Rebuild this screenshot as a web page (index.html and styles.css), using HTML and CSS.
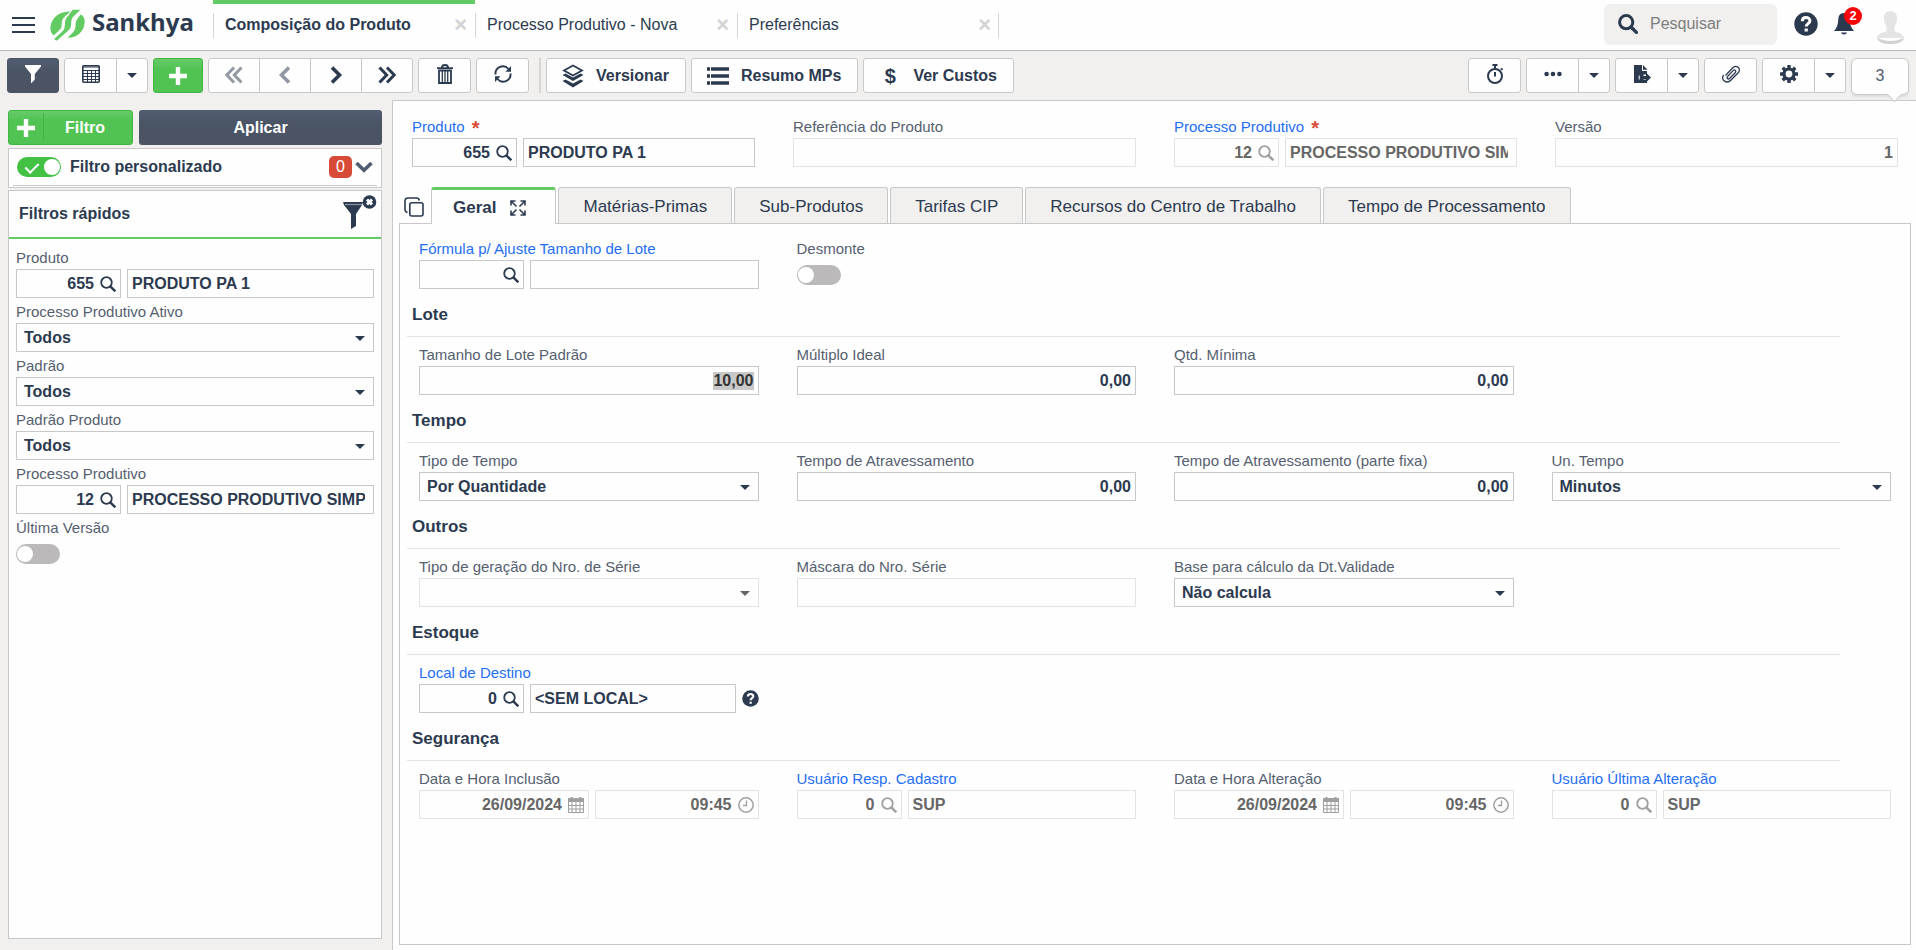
FILE: index.html
```html
<!DOCTYPE html>
<html lang="pt-BR">
<head>
    <meta charset="UTF-8">
    <meta name="viewport" content="width=device-width, initial-scale=1.0">
    <title>Composição do Produto</title>
    <link rel="stylesheet" href="styles.css">
</head>
<body>
    <!-- icons -->
    <svg class="sprite" aria-hidden="true">
        <symbol id="i-search" viewBox="0 0 16 16"><circle cx="6.5" cy="6.5" r="5.3" fill="none" stroke="currentColor" stroke-width="1.8"/><path d="M10.3 10.3l5 5" stroke="currentColor" stroke-width="2.4"/></symbol>
        <symbol id="i-search-bold" viewBox="0 0 20 20"><circle cx="8.2" cy="8.2" r="6.6" fill="none" stroke="currentColor" stroke-width="3"/><path d="M13 13l5.4 5.4" stroke="currentColor" stroke-width="3.4" stroke-linecap="round"/></symbol>
        <symbol id="i-funnel" viewBox="0 0 18 18"><path d="M1 0h16v1.500l-6.200 7.500v5.500l-3.300 3.500h-.5V9L1 1.500z" fill="currentColor"/></symbol>
        <symbol id="i-table" viewBox="0 0 18 18"><rect x=".8" y=".8" width="16.400" height="16.400" rx="1" fill="none" stroke="currentColor" stroke-width="1.600"/><path d="M1 2h16M1 5.500h16M1 8.500h16M1 11.500h16M1 14.500h16M5.500 5v12M9.500 5v12M13.500 5v12" stroke="currentColor" stroke-width="1"/></symbol>
        <symbol id="i-plus" viewBox="0 0 18 18"><path d="M9 0v18M0 9h18" stroke="currentColor" stroke-width="4.400"/></symbol>
        <symbol id="i-left" viewBox="0 0 18 18"><path d="M13 1.500L5.500 9l7.500 7.500" fill="none" stroke="currentColor" stroke-width="3.600"/></symbol>
        <symbol id="i-right" viewBox="0 0 18 18"><path d="M5 1.500L12.500 9 5 16.500" fill="none" stroke="currentColor" stroke-width="3.600"/></symbol>
        <symbol id="i-first" viewBox="0 0 18 18"><path d="M9 1.500L1.800 9 9 16.500M16.500 1.500L9.300 9l7.200 7.500" fill="none" stroke="currentColor" stroke-width="3"/></symbol>
        <symbol id="i-last" viewBox="0 0 18 18"><path d="M1.500 1.500L8.700 9l-7.200 7.500M9 1.500L16.200 9 9 16.500" fill="none" stroke="currentColor" stroke-width="3"/></symbol>
        <symbol id="i-trash" viewBox="0 0 16 20"><path d="M0 4.200h16M5 3.500C5 1.800 6.500 1 8 1s3 .8 3 2.500" fill="none" stroke="currentColor" stroke-width="1.800"/><path d="M2 6.500h12v12.500H2z" fill="none" stroke="currentColor" stroke-width="1.800"/><path d="M5.300 7v11M8 7v11M10.700 7v11" stroke="currentColor" stroke-width="1.300"/></symbol>
        <symbol id="i-refresh" viewBox="0 0 18 18"><path d="M1.500 9.500A7.400 7.400 0 0 1 14.500 4M16.500 8.500A7.400 7.400 0 0 1 3.500 14" fill="none" stroke="currentColor" stroke-width="1.900"/><path d="M17 1v5.800H11.500zM1 17v-5.800h5.500z" fill="currentColor"/></symbol>
        <symbol id="i-layers" viewBox="0 0 22 24"><path d="M11 1.500l9 5-9 5-9-5z" fill="none" stroke="currentColor" stroke-width="1.800"/><path d="M.5 11l3-1.500L11 13.500l7.500-4 3 1.500L11 17z" fill="currentColor"/><path d="M.5 17l3-1.500L11 19.500l7.500-4 3 1.500L11 23.500z" fill="currentColor"/></symbol>
        <symbol id="i-list" viewBox="0 0 22 18"><path d="M0 2h3M0 9h3M0 16h3M4 2h18M4 9h18M4 16h18" stroke="currentColor" stroke-width="3.400"/></symbol>
        <symbol id="i-stopwatch" viewBox="0 0 18 20"><circle cx="9" cy="12" r="7" fill="none" stroke="currentColor" stroke-width="2"/><path d="M6.500 1h5M9 1v3.500M9 8v4.500M14.800 4.500l1.800 1.300" stroke="currentColor" stroke-width="2"/></symbol>
        <symbol id="i-dots" viewBox="0 0 18 18"><circle cx="2.600" cy="9" r="2.300" fill="currentColor"/><circle cx="9" cy="9" r="2.300" fill="currentColor"/><circle cx="15.400" cy="9" r="2.300" fill="currentColor"/></symbol>
        <symbol id="i-export" viewBox="0 0 18 18"><path d="M1 0h8v6h5v3.500h-3.500v5H14V18H1z" fill="currentColor"/><path d="M10 0l4.500 4.800H10z" fill="currentColor"/><path d="M8 11h5V7.500l5 5-5 5V14H8z" fill="currentColor"/><path d="M6.200 10.500v4" stroke="#fff" stroke-width="1"/></symbol>
        <symbol id="i-clip" viewBox="0 0 20 18"><path d="M4.500 10.500l6.800-7.200c1.500-1.600 3.600-2.600 5.600-1.200 2 1.600 1.800 3.900.3 5.600l-7.400 7.600c-1.500 1.500-4.200 2.200-6.600.6-2.100-1.700-2-4.200-.4-6M6.800 11.200l5.300-5.600c.7-.7 1.700-.8 2.300-.2s.5 1.600-.2 2.300l-5.400 5.600c-.7.700-1.700.8-2.300.2s-.4-1.600.3-2.300" fill="none" stroke="currentColor" stroke-width="1.300"/></symbol>
        <symbol id="i-gear" viewBox="0 0 18 18"><circle cx="9" cy="9" r="5" fill="none" stroke="currentColor" stroke-width="3.200"/><path d="M9 0v3.500M9 14.500V18M0 9h3.500M14.500 9H18M2.700 2.700L5.200 5.200M12.800 12.800l2.500 2.500M2.700 15.300l2.500-2.500M12.800 5.200l2.500-2.500" stroke="currentColor" stroke-width="3.400"/></symbol>
        <symbol id="i-help" viewBox="0 0 24 24"><circle cx="12" cy="12" r="11.700" fill="currentColor"/><path d="M8.300 9.300c0-5 7.600-4.700 7.600-.5 0 2.900-3.700 2.700-3.700 5.700" fill="none" stroke="#fff" stroke-width="3"/><path d="M10.600 16.500h3.200v3h-3.200z" fill="#fff"/></symbol>
        <symbol id="i-bell" viewBox="0 0 20 23"><path d="M10 1c4 0 5.500 2.800 5.700 6.500.2 5 1.500 8.500 4.300 11.500H0c2.800-3 4.100-6.500 4.300-11.500C4.500 3.800 6 1 10 1zM7 20.500h6c-.5 1.300-1.500 2-3 2s-2.500-.7-3-2z" fill="currentColor"/></symbol>
        <symbol id="i-calendar" viewBox="0 0 16 16"><path d="M0 1h16v4H0zM2.500 0h2v2h-2zM11.500 0h2v2h-2z" fill="currentColor"/><path d="M.5 5v10.500h15V5M0 8.500h16M0 12h16M4 5v11M8 5v11M12 5v11" fill="none" stroke="currentColor" stroke-width="1"/></symbol>
        <symbol id="i-clock" viewBox="0 0 16 16"><circle cx="8" cy="8" r="7.200" fill="none" stroke="currentColor" stroke-width="1.500"/><path d="M8.500 3.500V8.500H5" fill="none" stroke="currentColor" stroke-width="1.300"/></symbol>
        <symbol id="i-expand" viewBox="0 0 16 16"><path d="M1 5.500V1h4.500M10.500 1H15v4.500M15 10.500V15h-4.500M5.500 15H1v-4.500M1.500 1.500l5 5M14.500 1.500l-5 5M14.500 14.500l-5-5M1.500 14.500l5-5" fill="none" stroke="currentColor" stroke-width="1.600"/></symbol>
        <symbol id="i-copy" viewBox="0 0 20 20"><rect x="5.800" y="5.800" width="13.200" height="13.200" rx="2" fill="none" stroke="currentColor" stroke-width="1.600"/><path d="M3.500 15.500C1.800 15 1 14.300 1 12.500V4c0-2 1-3 3-3h8.500c1.800 0 2.500.7 3 2.500" fill="none" stroke="currentColor" stroke-width="1.600"/></symbol>
        <symbol id="i-down" viewBox="0 0 18 12"><path d="M1.500 2L9 9.300 16.500 2" fill="none" stroke="currentColor" stroke-width="3.600"/></symbol>
        <symbol id="i-clear" viewBox="0 0 34 34"><path d="M0 7h20l-1 3-6 9v12l-5 3V19L1 10z" fill="currentColor"/><path d="M2 9.500h17" stroke="#8a93a0" stroke-width="1.200"/><circle cx="26.500" cy="7" r="6.800" fill="currentColor"/><path d="M24 4.500l5 5M29 4.500l-5 5" stroke="#fff" stroke-width="3"/></symbol>
    </svg>

    <header class="topbar">
        <button class="menu" aria-label="Menu"><span></span><span></span><span></span></button>
        <a href="#" class="logo">
            <svg width="35" height="32" viewBox="0 0 35 32" aria-hidden="true">
                <path d="M20.500 2.500C9 2.500 2 8.500.6 17c-.7 4.500.8 8 3.400 9.300l4.200-4c3.800-3.300 3.300-4 3.500-7.500.1-4 1.200-5.300 4-8z" fill="#62cb63"/>
                <path d="M22.500.8h8l-5.800 5.400c-2.900 2.800-3.300 4-3.500 8-.2 4.300-.8 5.500-4 8.300L7 31.500c-1.500-.2-2-.7-2.800-1.600l7.800-7.200c2.400-2.400 2.700-3.500 2.900-7.500.2-4.500 1.200-6.500 3.800-9z" fill="#62cb63"/>
                <path d="M30.800 5.500c3 1.200 4.300 4.500 3.800 8.800-.9 8.500-7.600 14.500-16.800 14.500l3.800-4c3-2.900 3.800-4.600 3.900-8.600.1-3.500.7-4.900 2.800-7.700z" fill="#62cb63"/>
            </svg>
            <span>Sankhya</span>
        </a>
        <nav class="pages">
            <div class="page active"><a href="#">Composição do Produto</a><button aria-label="Fechar">×</button></div>
            <div class="page"><a href="#">Processo Produtivo - Nova</a><button aria-label="Fechar">×</button></div>
            <div class="page"><a href="#">Preferências</a><button aria-label="Fechar">×</button></div>
        </nav>
        <div class="search">
            <svg width="20" height="20"><use href="#i-search-bold"/></svg>
            <input type="text" placeholder="Pesquisar" aria-label="Pesquisar">
        </div>
        <button class="top-icon" aria-label="Ajuda"><svg width="24" height="24"><use href="#i-help"/></svg></button>
        <button class="top-icon bell" aria-label="Notificações"><svg width="20" height="23"><use href="#i-bell"/></svg><span class="count">2</span></button>
        <button class="top-icon avatar" aria-label="Usuário">
            <svg width="27" height="33" viewBox="0 0 27 33"><path d="M13.500 0c4.500 0 6.500 3 6.500 7 0 3-.7 6-2.500 8v5.500c4.500 1 9.500 3 9.500 6.500H0c0-3.500 5-5.500 9.500-6.500V15C7.700 13 7 10 7 7c0-4 2-7 6.500-7z" fill="#e4e4e4"/><path d="M0 27c2 0 5 3 13.500 3S25 27 27 27c-1 4-6 6-13.500 6S1 31 0 27z" fill="#d2d2d2"/></svg>
        </button>
    </header>

    <div class="toolbar">
        <button class="btn dark" aria-label="Filtros"><svg width="18" height="18"><use href="#i-funnel"/></svg></button>
        <div class="group">
            <button class="btn" aria-label="Modo grade"><svg width="18" height="18"><use href="#i-table"/></svg></button>
            <button class="btn drop" aria-label="Mais modos"><i class="caret"></i></button>
        </div>
        <button class="btn add" aria-label="Adicionar"><svg width="18" height="18"><use href="#i-plus"/></svg></button>
        <div class="group nav">
            <button class="btn" disabled aria-label="Primeiro"><svg width="18" height="18"><use href="#i-first"/></svg></button>
            <button class="btn" disabled aria-label="Anterior"><svg width="18" height="18"><use href="#i-left"/></svg></button>
            <button class="btn" aria-label="Próximo"><svg width="18" height="18"><use href="#i-right"/></svg></button>
            <button class="btn" aria-label="Último"><svg width="18" height="18"><use href="#i-last"/></svg></button>
        </div>
        <button class="btn" aria-label="Excluir"><svg width="16" height="20"><use href="#i-trash"/></svg></button>
        <button class="btn" aria-label="Atualizar"><svg width="18" height="18"><use href="#i-refresh"/></svg></button>
        <span class="sep"></span>
        <button class="btn text"><svg width="22" height="24"><use href="#i-layers"/></svg>Versionar</button>
        <button class="btn text"><svg width="22" height="18"><use href="#i-list"/></svg>Resumo MPs</button>
        <button class="btn text"><span class="money">$</span>Ver Custos</button>

        <button class="btn push" aria-label="Cronômetro"><svg width="18" height="20"><use href="#i-stopwatch"/></svg></button>
        <div class="group">
            <button class="btn" aria-label="Mais opções"><svg width="18" height="18"><use href="#i-dots"/></svg></button>
            <button class="btn drop" aria-label="Abrir opções"><i class="caret"></i></button>
        </div>
        <div class="group">
            <button class="btn" aria-label="Exportar"><svg width="18" height="18"><use href="#i-export"/></svg></button>
            <button class="btn drop" aria-label="Abrir exportação"><i class="caret"></i></button>
        </div>
        <button class="btn" aria-label="Anexos"><svg width="20" height="18"><use href="#i-clip"/></svg></button>
        <div class="group">
            <button class="btn" aria-label="Configurações"><svg width="18" height="18"><use href="#i-gear"/></svg></button>
            <button class="btn drop" aria-label="Abrir configurações"><i class="caret"></i></button>
        </div>
        <div class="records">3</div>
    </div>

    <div class="workspace">
        <!-- filters -->
        <aside class="sidebar">
            <div class="filter-actions">
                <button class="new-filter"><span><svg width="18" height="18"><use href="#i-plus"/></svg></span><b>Filtro</b></button>
                <button class="apply">Aplicar</button>
            </div>
            <div class="custom-filter">
                <div class="custom-filter-row">
                    <input type="checkbox" class="switch" id="filtro-personalizado" checked>
                    <label for="filtro-personalizado">Filtro personalizado</label>
                    <span class="badge">0</span>
                    <button aria-label="Expandir"><svg width="18" height="12"><use href="#i-down"/></svg></button>
                </div>
            </div>
            <section class="quick">
                <div class="quick-head">
                    <h2>Filtros rápidos</h2>
                    <button aria-label="Limpar filtros"><svg width="34" height="34"><use href="#i-clear"/></svg></button>
                </div>
                <div class="quick-body">
                    <div class="field">
                        <label for="f-produto">Produto</label>
                        <div class="pair">
                            <div class="box code"><input type="text" id="f-produto" value="655"><button aria-label="Pesquisar produto"><svg width="16" height="16"><use href="#i-search"/></svg></button></div>
                            <div class="box"><input type="text" value="PRODUTO PA 1" aria-label="Descrição do produto"></div>
                        </div>
                    </div>
                    <div class="field">
                        <label for="f-ativo">Processo Produtivo Ativo</label>
                        <div class="box choice"><select id="f-ativo"><option>Todos</option></select></div>
                    </div>
                    <div class="field">
                        <label for="f-padrao">Padrão</label>
                        <div class="box choice"><select id="f-padrao"><option>Todos</option></select></div>
                    </div>
                    <div class="field">
                        <label for="f-padrao-produto">Padrão Produto</label>
                        <div class="box choice"><select id="f-padrao-produto"><option>Todos</option></select></div>
                    </div>
                    <div class="field">
                        <label for="f-processo">Processo Produtivo</label>
                        <div class="pair">
                            <div class="box code"><input type="text" id="f-processo" value="12"><button aria-label="Pesquisar processo"><svg width="16" height="16"><use href="#i-search"/></svg></button></div>
                            <div class="box"><input type="text" value="PROCESSO PRODUTIVO SIMPLES" aria-label="Descrição do processo"></div>
                        </div>
                    </div>
                    <div class="field">
                        <label for="f-ultima">Última Versão</label>
                        <input type="checkbox" class="switch" id="f-ultima">
                    </div>
                </div>
            </section>
        </aside>

        <main class="content">
            <div class="columns head-fields">
                <div class="field">
                    <label for="produto" class="link">Produto <span class="req">*</span></label>
                    <div class="pair">
                        <div class="box code"><input type="text" id="produto" value="655"><button aria-label="Pesquisar produto"><svg width="16" height="16"><use href="#i-search"/></svg></button></div>
                        <div class="box"><input type="text" value="PRODUTO PA 1" aria-label="Descrição do produto"></div>
                    </div>
                </div>
                <div class="field">
                    <label for="referencia">Referência do Produto</label>
                    <div class="box off"><input type="text" id="referencia" disabled></div>
                </div>
                <div class="field">
                    <label for="processo" class="link">Processo Produtivo <span class="req">*</span></label>
                    <div class="pair">
                        <div class="box code off"><input type="text" id="processo" value="12" disabled><button disabled aria-label="Pesquisar processo"><svg width="16" height="16"><use href="#i-search"/></svg></button></div>
                        <div class="box off"><input type="text" value="PROCESSO PRODUTIVO SIMPLES" disabled aria-label="Descrição do processo"></div>
                    </div>
                </div>
                <div class="field">
                    <label for="versao">Versão</label>
                    <div class="box num off"><input type="text" id="versao" value="1" disabled></div>
                </div>
            </div>

            <div class="tabs">
                <button class="copy" aria-label="Abas"><svg width="20" height="20"><use href="#i-copy"/></svg></button>
                <button class="tab active">Geral<svg width="16" height="16"><use href="#i-expand"/></svg></button>
                <button class="tab">Matérias-Primas</button>
                <button class="tab">Sub-Produtos</button>
                <button class="tab">Tarifas CIP</button>
                <button class="tab">Recursos do Centro de Trabalho</button>
                <button class="tab">Tempo de Processamento</button>
            </div>

            <div class="panel">
                <div class="columns">
                    <div class="field">
                        <label for="formula" class="link">Fórmula p/ Ajuste Tamanho de Lote</label>
                        <div class="pair">
                            <div class="box code"><input type="text" id="formula"><button aria-label="Pesquisar fórmula"><svg width="16" height="16"><use href="#i-search"/></svg></button></div>
                            <div class="box"><input type="text" aria-label="Descrição da fórmula"></div>
                        </div>
                    </div>
                    <div class="field">
                        <label for="desmonte">Desmonte</label>
                        <input type="checkbox" class="switch" id="desmonte">
                    </div>
                </div>

                <h3>Lote</h3>
                <div class="columns">
                    <div class="field">
                        <label for="lote">Tamanho de Lote Padrão</label>
                        <div class="box num"><input type="text" id="lote" value="10,00"></div>
                    </div>
                    <div class="field">
                        <label for="multiplo">Múltiplo Ideal</label>
                        <div class="box num"><input type="text" id="multiplo" value="0,00"></div>
                    </div>
                    <div class="field">
                        <label for="minima">Qtd. Mínima</label>
                        <div class="box num"><input type="text" id="minima" value="0,00"></div>
                    </div>
                </div>

                <h3>Tempo</h3>
                <div class="columns">
                    <div class="field">
                        <label for="tipo-tempo">Tipo de Tempo</label>
                        <div class="box choice"><select id="tipo-tempo"><option>Por Quantidade</option></select></div>
                    </div>
                    <div class="field">
                        <label for="atravessamento">Tempo de Atravessamento</label>
                        <div class="box num"><input type="text" id="atravessamento" value="0,00"></div>
                    </div>
                    <div class="field">
                        <label for="parte-fixa">Tempo de Atravessamento (parte fixa)</label>
                        <div class="box num"><input type="text" id="parte-fixa" value="0,00"></div>
                    </div>
                    <div class="field">
                        <label for="un-tempo">Un. Tempo</label>
                        <div class="box choice"><select id="un-tempo"><option>Minutos</option></select></div>
                    </div>
                </div>

                <h3>Outros</h3>
                <div class="columns">
                    <div class="field">
                        <label for="tipo-serie">Tipo de geração do Nro. de Série</label>
                        <div class="box choice off"><select id="tipo-serie" disabled><option></option></select></div>
                    </div>
                    <div class="field">
                        <label for="mascara">Máscara do Nro. Série</label>
                        <div class="box off"><input type="text" id="mascara" disabled></div>
                    </div>
                    <div class="field">
                        <label for="validade">Base para cálculo da Dt.Validade</label>
                        <div class="box choice"><select id="validade"><option>Não calcula</option></select></div>
                    </div>
                </div>

                <h3>Estoque</h3>
                <div class="columns">
                    <div class="field">
                        <label for="local" class="link">Local de Destino</label>
                        <div class="pair">
                            <div class="box code"><input type="text" id="local" value="0"><button aria-label="Pesquisar local"><svg width="16" height="16"><use href="#i-search"/></svg></button></div>
                            <div class="box"><input type="text" value="&lt;SEM LOCAL&gt;" aria-label="Descrição do local"></div>
                            <button class="hint" aria-label="Ajuda"><svg width="17" height="17"><use href="#i-help"/></svg></button>
                        </div>
                    </div>
                </div>

                <h3>Segurança</h3>
                <div class="columns">
                    <div class="field">
                        <label for="inclusao">Data e Hora Inclusão</label>
                        <div class="pair">
                            <div class="box date off"><input type="text" id="inclusao" value="26/09/2024" disabled><button disabled aria-label="Calendário"><svg width="16" height="16"><use href="#i-calendar"/></svg></button></div>
                            <div class="box num off"><input type="text" value="09:45" disabled aria-label="Hora inclusão"><button disabled aria-label="Relógio"><svg width="16" height="16"><use href="#i-clock"/></svg></button></div>
                        </div>
                    </div>
                    <div class="field">
                        <label for="cadastro" class="link">Usuário Resp. Cadastro</label>
                        <div class="pair">
                            <div class="box code off"><input type="text" id="cadastro" value="0" disabled><button disabled aria-label="Pesquisar usuário"><svg width="16" height="16"><use href="#i-search"/></svg></button></div>
                            <div class="box off"><input type="text" value="SUP" disabled aria-label="Nome do usuário"></div>
                        </div>
                    </div>
                    <div class="field">
                        <label for="alteracao">Data e Hora Alteração</label>
                        <div class="pair">
                            <div class="box date off"><input type="text" id="alteracao" value="26/09/2024" disabled><button disabled aria-label="Calendário"><svg width="16" height="16"><use href="#i-calendar"/></svg></button></div>
                            <div class="box num off"><input type="text" value="09:45" disabled aria-label="Hora alteração"><button disabled aria-label="Relógio"><svg width="16" height="16"><use href="#i-clock"/></svg></button></div>
                        </div>
                    </div>
                    <div class="field">
                        <label for="ultima-alteracao" class="link">Usuário Última Alteração</label>
                        <div class="pair">
                            <div class="box code off"><input type="text" id="ultima-alteracao" value="0" disabled><button disabled aria-label="Pesquisar usuário"><svg width="16" height="16"><use href="#i-search"/></svg></button></div>
                            <div class="box off"><input type="text" value="SUP" disabled aria-label="Nome do usuário"></div>
                        </div>
                    </div>
                </div>
            </div>
        </main>
    </div>

    <script src="script.js"></script>
</body>
</html>
```

FILE: styles.css
```css
* {
    box-sizing: border-box;
}
body {
    font-family: "Liberation Sans", Arial, sans-serif;
    font-size: 16px;
    color: #2c3a50;
    background-color: #f1f0ee;
    margin: 0;
    min-height: 100vh;
    display: flex;
    flex-direction: column;
}
button, input, select {
    font: inherit;
    color: inherit;
}
button {
    background: none;
    border: none;
    padding: 0;
    cursor: pointer;
}
a {
    color: inherit;
    text-decoration: none;
}
svg {
    display: block;
    flex: none;
}
.sprite {
    position: absolute;
    width: 0;
    height: 0;
}

/* top bar */
.topbar {
    display: flex;
    align-items: center;
    height: 51px;
    padding: 0 12px;
    background-color: #fefefe;
    border-bottom: 1px solid #b9b9b9;
}
.menu {
    display: flex;
    flex-direction: column;
    gap: 5px;
    width: 23px;
}
.menu span {
    height: 2px;
    background-color: #2c3a50;
}
.logo {
    display: flex;
    align-items: center;
    gap: 7px;
    width: 163px;
    margin-left: 15px;
    font-family: "Noto Sans", "Open Sans", sans-serif;
    font-size: 24px;
    line-height: 32px;
    font-weight: bold;
}
.logo span {
    margin-top: -6px;
}
.pages {
    display: flex;
    align-self: stretch;
    flex: 1;
}
.page {
    display: flex;
    align-items: center;
    justify-content: space-between;
    width: 262px;
    padding: 0 8px 5px 12px;
    border-top: 4px solid transparent;
    background: linear-gradient(#d3d6dc, #d3d6dc) 0 9px / 1px 25px no-repeat;
}
.page.active {
    border-top-color: #62cb63;
    font-weight: bold;
}
.page:last-child {
    background: linear-gradient(#d3d6dc, #d3d6dc) 0 9px / 1px 25px no-repeat, linear-gradient(#d3d6dc, #d3d6dc) 100% 9px / 1px 25px no-repeat;
}
.page button {
    color: #d3d3d3;
    font-size: 22px;
    line-height: 20px;
    font-weight: bold;
}
.search {
    display: flex;
    align-items: center;
    gap: 12px;
    width: 173px;
    height: 41px;
    margin-bottom: 2px;
    padding: 0 14px;
    border-radius: 6px;
    background-color: #f1f0ee;
}
.search input {
    width: 100%;
    min-width: 0;
    padding: 0;
    border: none;
    background: none;
}
.search input::placeholder {
    color: #7d7d7d;
}
.top-icon {
    position: relative;
    margin: 0 0 3px 17px;
}
.bell {
    margin-left: 16px;
}
.count {
    position: absolute;
    top: -5px;
    right: -8px;
    width: 18px;
    border-radius: 9px;
    background-color: #fb0007;
    color: #fff;
    font-size: 13px;
    line-height: 18px;
    font-weight: bold;
}
.avatar {
    margin: 5px 0 0 23px;
}

/* toolbar */
.toolbar {
    display: flex;
    gap: 5px;
    height: 49px;
    padding: 7px 7px 0;
}
.group {
    display: flex;
}
.group .btn + .btn {
    margin-left: -1px;
    border-top-left-radius: 0;
    border-bottom-left-radius: 0;
}
.group .btn:not(:last-child) {
    border-top-right-radius: 0;
    border-bottom-right-radius: 0;
}
.btn {
    display: flex;
    align-items: center;
    justify-content: center;
    width: 53px;
    height: 35px;
    padding-bottom: 4px;
    border: 1px solid #c8c8c8;
    border-radius: 3px;
    background-color: #fefefe;
}
.btn:disabled {
    color: #9299a3;
}
.nav .btn, .btn.dark {
    width: 52px;
}
.nav .btn {
    padding-bottom: 2px;
}
.btn.drop {
    width: 32px;
    padding-bottom: 0;
}
.caret {
    border: 5px solid transparent;
    border-top-color: #2c3a50;
    border-bottom: none;
}
.btn.dark, .apply {
    background: linear-gradient(#525d70, #4a5464 40%);
    border-color: #4a5464;
    color: #fff;
}
.btn.add {
    width: 50px;
    padding-bottom: 0;
}
.btn.add, .new-filter {
    background: linear-gradient(#67cb69, #50c352 30%);
    border: 1px solid #3fb842;
    color: #fff;
}
.sep {
    width: 2px;
    height: 35px;
    margin-left: 5px;
    background-color: #d6d6d6;
}
.btn.text {
    width: auto;
    gap: 12px;
    padding: 0 16px 0 15px;
    font-weight: bold;
}
.money {
    width: 22px;
    font-size: 20px;
    line-height: 22px;
}
.push {
    margin-left: auto;
}
.records {
    position: relative;
    width: 58px;
    height: 37px;
    border: 1px solid #c8c8c8;
    border-radius: 6px;
    background-color: #fefefe;
    box-shadow: 0 2px 2px #ddd;
    color: #4f5b6e;
    line-height: 33px;
    text-align: center;
}
.records::after {
    content: "";
    position: absolute;
    right: 8px;
    bottom: -6px;
    width: 10px;
    height: 10px;
    border: 1px solid #c8c8c8;
    border-width: 0 1px 1px 0;
    background-color: #fefefe;
    transform: rotate(45deg);
}

.workspace {
    display: flex;
    flex: 1;
}

/* sidebar */
.sidebar {
    display: flex;
    flex-direction: column;
    width: 392px;
    padding: 10px 10px 11px 8px;
}
.filter-actions {
    display: flex;
    gap: 6px;
    height: 35px;
    margin-bottom: 3px;
    font-weight: bold;
}
.new-filter {
    display: flex;
    align-items: center;
    width: 125px;
    border-radius: 3px;
}
.new-filter span {
    display: flex;
    align-items: center;
    justify-content: center;
    width: 35px;
    height: 29px;
    border-right: 1px solid #3fb842;
}
.new-filter b {
    flex: 1;
    padding-right: 6px;
}
.apply {
    flex: 1;
    border-radius: 3px;
}
.custom-filter {
    height: 40px;
    margin-bottom: 2px;
    padding: 0 4px;
    border: 1px solid #c8c8c8;
    background-color: #fefefe;
}
.custom-filter-row {
    display: flex;
    align-items: center;
    height: 37px;
    padding: 0 4px;
    border-bottom: 1px solid #c8c8c8;
    font-weight: bold;
}
.custom-filter-row label {
    flex: 1;
    margin-left: 9px;
}
.custom-filter-row button {
    margin-left: 3px;
    color: #4f5b6e;
}
.badge {
    width: 23px;
    border-radius: 5px;
    background-color: #d84a38;
    color: #fff;
    line-height: 22px;
    font-weight: normal;
    text-align: center;
}
.switch {
    appearance: none;
    position: relative;
    display: block;
    width: 44px;
    height: 20px;
    margin: 0;
    border-radius: 10px;
    background-color: #bbb9ba;
}
.switch::before {
    content: "";
    position: absolute;
    top: 2px;
    left: 1px;
    width: 16px;
    height: 16px;
    border-radius: 8px;
    background-color: #fff;
}
.switch:checked {
    background-color: #42c145;
}
.switch:checked::before {
    left: 27px;
}
.switch:checked::after {
    content: "";
    position: absolute;
    top: 3px;
    left: 11px;
    width: 6px;
    height: 11px;
    border: 2px solid #fff;
    border-width: 0 2px 2px 0;
    transform: rotate(45deg);
}
.quick {
    flex: 1;
    border: 1px solid #c8c8c8;
    background-color: #fefefe;
}
.quick-head {
    display: flex;
    align-items: center;
    justify-content: space-between;
    height: 48px;
    padding: 0 4px 0 10px;
    border-bottom: 2px solid #62cb63;
}
.quick-head h2 {
    margin: 0;
    font-size: 16px;
}
.quick-head button {
    padding-bottom: 5px;
}
.quick-body {
    display: flex;
    flex-direction: column;
    gap: 4px;
    padding: 9px 7px;
}

/* fields */
.field label {
    display: block;
    height: 21px;
    color: #556070;
    font-size: 15px;
    line-height: 19px;
    white-space: nowrap;
}
.field label.link {
    color: #1f6ff5;
}
.req {
    margin-left: 3px;
    color: #d84a38;
    font-size: 20px;
    line-height: 15px;
    font-weight: bold;
    vertical-align: -3px;
}
.pair {
    display: flex;
    align-items: center;
    gap: 6px;
}
.box {
    position: relative;
    display: flex;
    align-items: center;
    flex: 1;
    min-width: 0;
    height: 29px;
    border: 1px solid #c8c8c8;
    background-color: #fefefe;
}
.box input, .box select {
    width: 100%;
    min-width: 0;
    height: 27px;
    padding: 0 8px 0 4px;
    border: none;
    background: none;
    outline: none;
    font-weight: bold;
}
.box input::selection {
    background-color: #c8c8c8;
    color: #333;
}
.box button {
    padding-right: 4px;
}
.box select {
    appearance: none;
    padding: 0 7px;
    opacity: 1;
}
.choice::after {
    content: "";
    position: absolute;
    top: 12px;
    right: 8px;
    border: 5px solid transparent;
    border-top-color: #2c3a50;
    border-bottom: none;
    pointer-events: none;
}
.code {
    flex: 0 0 105px;
}
.date {
    flex: 0 0 170px;
}
.code input, .date input, .num input {
    padding-right: 4px;
    text-align: right;
}
.box input:not(:last-child) {
    padding-right: 6px;
}
.off {
    border-color: #e3e3e3;
    color: #666;
}
.off button {
    color: #9f9f9f;
}
.off.choice::after {
    border-top-color: #666;
}
.field > .switch {
    margin-top: 5px;
}

/* content */
.content {
    display: flex;
    flex-direction: column;
    flex: 1;
    min-width: 0;
    padding: 16px 5px 5px 6px;
    border: 1px solid #c8c8c8;
    border-width: 1px 0 0 1px;
    background-color: #fefefe;
}
.columns {
    display: grid;
    grid-template-columns: repeat(4, minmax(0, 1fr));
    gap: 38px;
}
.head-fields {
    padding: 0 13px 20px;
}
.tabs {
    display: flex;
    gap: 2px;
    height: 36px;
}
.copy {
    width: 30px;
    padding: 3px 0 0 5px;
}
.tab {
    height: 36px;
    padding: 3px 24px 0;
    border: 1px solid #c8c8c8;
    border-bottom: none;
    border-radius: 3px 3px 0 0;
    background-color: #f1f0ee;
    font-size: 17px;
    white-space: nowrap;
}
.tab.active {
    display: flex;
    align-items: center;
    gap: 14px;
    height: 37px;
    padding: 1px 29px 0 21px;
    border-top: 3px solid #62cb63;
    background-color: #fefefe;
    font-weight: bold;
    z-index: 1;
}
.panel {
    flex: 1;
    padding: 15px 19px 16px 7px;
    border: 1px solid #c8c8c8;
}
.panel .columns {
    padding-left: 12px;
}
.panel h3 {
    margin: 0 51px 8px 0;
    padding: 5px 0 0 5px;
    border-bottom: 1px solid #e3e3e3;
    font-size: 17px;
    line-height: 42px;
}
.hint {
    width: 17px;
}
```

FILE: script.js
```js
// the lot size starts selected, ready to be typed over
const lote = document.getElementById('lote');
lote.focus();
lote.select();
```
